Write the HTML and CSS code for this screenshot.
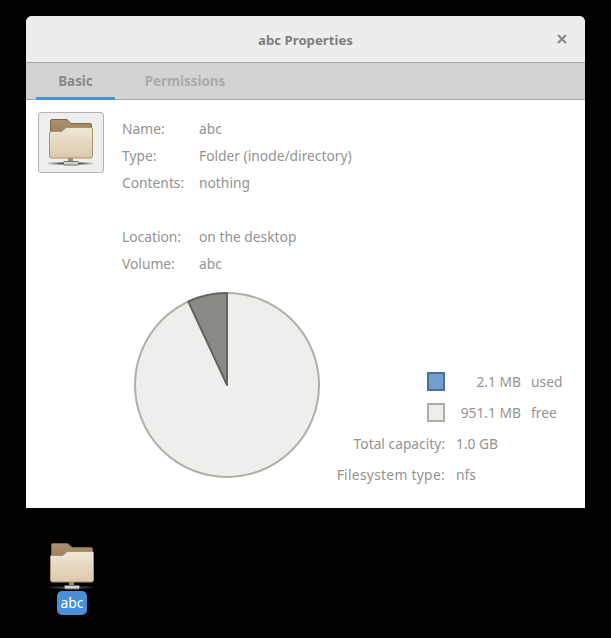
FILE: index.html
```html
<!DOCTYPE html>
<html lang="en">
<head>
<meta charset="utf-8">
<title>abc Properties</title>
<link rel="stylesheet" href="styles.css">
</head>
<body>
<svg class="defs" width="0" height="0" aria-hidden="true">
  <defs>
    <linearGradient id="front" x1="0" y1="0" x2="0" y2="1">
      <stop offset="0" stop-color="#efe6d8"/>
      <stop offset="1" stop-color="#dcc9aa"/>
    </linearGradient>
    <linearGradient id="back" x1="0" y1="0" x2="0" y2="1">
      <stop offset="0" stop-color="#ab9370"/>
      <stop offset="1" stop-color="#8f7a5c"/>
    </linearGradient>
    <linearGradient id="net" x1="0" y1="0" x2="1" y2="0">
      <stop offset="0" stop-color="#555" stop-opacity=".15"/>
      <stop offset=".3" stop-color="#444"/>
      <stop offset=".7" stop-color="#444"/>
      <stop offset="1" stop-color="#555" stop-opacity=".15"/>
    </linearGradient>
    <symbol id="folder" viewBox="0 0 48 48">
      <rect x="1" y="43.500" width="45" height="2" fill="url(#net)"/>
      <rect x="21" y="38" width="5" height="5" fill="#8f8f8b"/>
      <rect x="16.500" y="42.500" width="15" height="3.500" rx="1" fill="#d4d4d0" stroke="#6b6b68"/>
      <path d="M3.500 20V2q0-1.500 1.500-1.500h14q1 0 1.800.8l3.200 3.200h19q1.500 0 1.500 1.500V20z" fill="url(#back)" stroke="#7d6748"/>
      <path d="M2.500 37V13.500q0-1 1-1H14q1 0 1.800-.8l2.400-2.400q.8-.8 1.800-.8h24q1.500 0 1.500 1.500V37q0 2-2 2H4.500q-2 0-2-2z" fill="url(#front)" stroke="#b0925f"/>
    </symbol>
  </defs>
</svg>
<main class="window">
  <header class="titlebar">
    <h1 class="title">abc Properties</h1>
    <svg class="close" width="10" height="10" viewBox="0 0 10 10" aria-label="Close"><path d="M1 1l8 8M9 1l-8 8" stroke="#8a8a8a" stroke-width="2.200"/></svg>
  </header>
  <nav class="tabs">
    <span class="tab tab-active">Basic</span>
    <span class="tab">Permissions</span>
  </nav>
  <section class="content">
    <div class="top">
      <div class="icon-button"><svg width="48" height="48"><use href="#folder"/></svg></div>
      <div class="info">
        <span class="label">Name:</span><span>abc</span>
        <span class="label">Type:</span><span>Folder (inode/directory)</span>
        <span class="label">Contents:</span><span>nothing</span>
        <span class="spacer"></span>
        <span class="label">Location:</span><span>on the desktop</span>
        <span class="label">Volume:</span><span>abc</span>
      </div>
    </div>
    <div class="usage">
      <svg class="pie" width="188" height="188" viewBox="0 0 188 188">
        <circle cx="94" cy="94" r="92" fill="#eeeeec" stroke="#b0b0a8" stroke-width="2"/>
        <path d="M94 94V2A92 92 0 0 0 55.300 10.500z" fill="#888a85" stroke="#656560" stroke-width="2" stroke-linejoin="round"/>
      </svg>
      <div class="stats">
        <span class="swatch swatch-used"></span><span class="num">2.1 MB</span><span class="unit">used</span>
        <span class="swatch swatch-free"></span><span class="num">951.1 MB</span><span class="unit">free</span>
        <span class="stat-label">Total capacity:</span><span class="wide">1.0 GB</span>
        <span class="stat-label stat-label-long">Filesystem type:</span><span class="wide">nfs</span>
      </div>
    </div>
  </section>
</main>
<div class="desktop-item">
  <svg width="48" height="48"><use href="#folder"/></svg>
  <span class="desktop-label">abc</span>
</div>
</body>
</html>
```
FILE: styles.css
```css
* { box-sizing: border-box; }
html, body { margin: 0; height: 100%; }
body {
  background: #000;
  padding: 16px 26px 0;
  overflow: hidden;
  font-family: "Noto Sans", "Open Sans", sans-serif;
  font-size: 13.8px;
  color: #939393;
}
.defs { position: absolute; }
.window {
  width: 559px;
  height: 492px;
  background: #fff;
  border-radius: 6px 6px 0 0;
  overflow: hidden;
}
.titlebar {
  height: 47px;
  background: #ededed;
  border-bottom: 1px solid #a8a8a8;
  display: flex;
  align-items: center;
  justify-content: center;
  position: relative;
}
.title { margin: 2px 0 0; font-size: 13.2px; font-weight: 700; color: #7f7f7f; }
.close { position: absolute; right: 18px; top: 18px; }
.tabs {
  height: 37px;
  background: #d3d3d3;
  border-bottom: 1px solid #a8a8a8;
  display: flex;
  padding-left: 10px;
  font-size: 13.4px;
  font-weight: 700;
  color: #ababab;
}
.tab {
  width: 79px;
  height: 37px;
  display: flex;
  align-items: center;
  justify-content: center;
  padding-top: 2px;
  border-bottom: 3px solid transparent;
}
.tab + .tab { width: 140px; }
.tab-active { color: #8a8a8a; border-bottom-color: #4a90d9; }
.content { padding: 12px 12px 0; background: #fff; }
.top { display: flex; }
.icon-button {
  width: 66px;
  height: 61px;
  background: #eeeeee;
  border: 1px solid #b4b4b4;
  border-radius: 3px;
  display: flex;
  align-items: center;
  justify-content: center;
  margin-right: 18px;
}
.info {
  display: grid;
  grid-template-columns: 77px auto;
  grid-auto-rows: 27px;
  align-items: center;
  justify-content: start;
  padding-top: 3px;
}
.spacer { grid-column: 1 / -1; }
.usage { display: flex; padding-left: 95px; margin-top: 14px; }
.pie { flex: none; }
.stats {
  margin-top: 75px;
  padding-left: 1px;
  display: grid;
  grid-template-columns: 124px 65px auto;
  grid-auto-rows: 31px;
  align-items: center;
  column-gap: 10px;
  align-self: flex-start;
}
.swatch { justify-self: end; margin-right: 1px; width: 18px; height: 19px; border: 2px solid; }
.swatch-used { background: #729fcf; border-color: #4a7098; }
.swatch-free { background: #eeeeec; border-color: #aeaea6; }
.num { text-align: right; white-space: nowrap; }
.stat-label { text-align: right; white-space: nowrap; padding-right: 1px; }
.stat-label-long { letter-spacing: .3px; }
.wide { grid-column: 2 / -1; }
.desktop-item {
  width: 48px;
  margin: 35px 0 0 22px;
  display: flex;
  flex-direction: column;
  align-items: center;
}
.desktop-label {
  background: #4a90d9;
  color: #fff;
  border-radius: 5px;
  padding: 0 4px;
  font-size: 13.8px;
  line-height: 24px;
  height: 24px;
}
```
